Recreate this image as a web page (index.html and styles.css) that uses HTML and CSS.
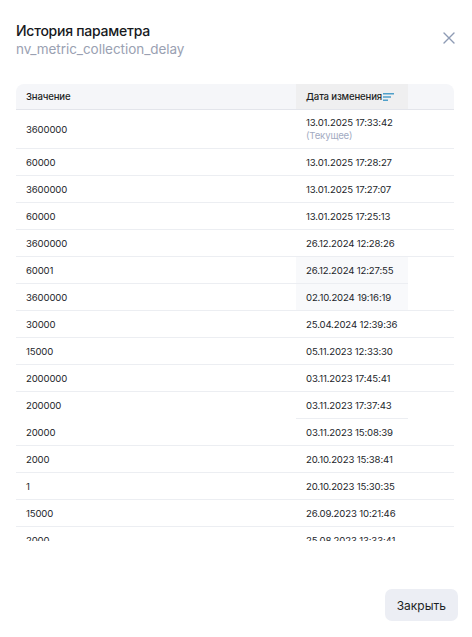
FILE: index.html
```html
<!DOCTYPE html>
<html lang="ru">
<head>
    <meta charset="UTF-8">
    <title>История параметра</title>
    <link rel="stylesheet" href="styles.css">
</head>
<body>
    <div class="modal">
        <!-- Header -->
        <div class="modal-head">
            <div>
                <h2 class="modal-title">История параметра</h2>
                <div class="modal-sub">nv_metric_collection_delay</div>
            </div>
            <button class="close-btn" aria-label="Закрыть">
                <svg width="12" height="12" viewBox="0 0 12 12"><path d="M1 1L11 11M11 1L1 11" stroke="#8e9bb4" stroke-width="1.4" stroke-linecap="round"/></svg>
            </button>
        </div>

        <!-- History table -->
        <div class="table-wrap">
            <table class="history">
                <colgroup>
                    <col class="col-value">
                    <col class="col-date">
                    <col class="col-rest">
                </colgroup>
                <thead>
                    <tr>
                        <th>Значение</th>
                        <th class="sorted">Дата изменения<svg class="sort-icon" width="11" height="8" viewBox="0 0 11 8"><path d="M0 0.75H11M0 4H8M0 7.25H5" stroke="#4f9fc9" stroke-width="1.3"/></svg></th>
                        <th></th>
                    </tr>
                </thead>
                <tbody>
                    <tr class="current">
                        <td>3600000</td>
                        <td>13.01.2025 17:33:42<span class="note">(Текущее)</span></td>
                        <td></td>
                    </tr>
                    <tr><td>60000</td><td>13.01.2025 17:28:27</td><td></td></tr>
                    <tr><td>3600000</td><td>13.01.2025 17:27:07</td><td></td></tr>
                    <tr><td>60000</td><td>13.01.2025 17:25:13</td><td></td></tr>
                    <tr><td>3600000</td><td>26.12.2024 12:28:26</td><td></td></tr>
                    <tr><td>60001</td><td class="hl">26.12.2024 12:27:55</td><td class="no-line"></td></tr>
                    <tr><td>3600000</td><td class="hl">02.10.2024 19:16:19</td><td></td></tr>
                    <tr><td>30000</td><td>25.04.2024 12:39:36</td><td></td></tr>
                    <tr><td>15000</td><td>05.11.2023 12:33:30</td><td></td></tr>
                    <tr><td>2000000</td><td>03.11.2023 17:45:41</td><td></td></tr>
                    <tr><td class="no-line">200000</td><td>03.11.2023 17:37:43</td><td class="no-line"></td></tr>
                    <tr><td>20000</td><td>03.11.2023 15:08:39</td><td></td></tr>
                    <tr><td>2000</td><td>20.10.2023 15:38:41</td><td></td></tr>
                    <tr><td>1</td><td>20.10.2023 15:30:35</td><td></td></tr>
                    <tr><td>15000</td><td>26.09.2023 10:21:46</td><td></td></tr>
                    <tr><td>2000</td><td>25.08.2023 13:33:41</td><td></td></tr>
                </tbody>
            </table>
        </div>

        <!-- Footer -->
        <div class="modal-foot">
            <button class="btn-close">Закрыть</button>
        </div>
    </div>
</body>
</html>
```

FILE: styles.css
```css
/* Global */
body {
    margin: 0;
    background: #fff;
    font-family: 'Inter', 'Noto Sans', sans-serif;
    color: #1d1f24;
}

.modal {
    height: 637px;
    display: flex;
    flex-direction: column;
    padding: 0 18px 16px 16px;
    box-sizing: border-box;
}

/* Header */
.modal-head {
    display: flex;
    justify-content: space-between;
    align-items: flex-start;
    padding-top: 22px;
}

.modal-title {
    margin: 0;
    font-size: 14px;
    font-weight: 500;
    line-height: 18px;
    letter-spacing: -0.25px;
    color: #17191d;
}

.modal-sub {
    margin-top: 1px;
    font-size: 13.5px;
    line-height: 17px;
    color: #9aa1b2;
    letter-spacing: -0.05px;
}

.close-btn {
    border: none;
    background: none;
    padding: 0;
    margin-top: 10px;
    margin-right: -1px;
    width: 12px;
    height: 12px;
    cursor: pointer;
}

/* Table */
.table-wrap {
    margin-top: 26px;
    height: 457px;
    overflow: hidden;
}

.history {
    width: 438px;
    border-collapse: separate;
    border-spacing: 0;
    table-layout: fixed;
    font-size: 9.6px;
    letter-spacing: -0.15px;
}

.col-value { width: 280px; }
.col-date { width: 112px; }
.col-rest { width: 46px; }

.history th {
    height: 25px;
    padding: 0 10px;
    text-align: left;
    font-weight: 500;
    background: #f5f6f9;
    border-bottom: 1px solid #e3e5eb;
    color: #1d1f24;
    white-space: nowrap;
}

.history th:first-child { border-top-left-radius: 8px; }
.history th:last-child { border-top-right-radius: 8px; }

.history th.sorted {
    background: #efeff0;
}

.sort-icon {
    margin-left: 1px;
    vertical-align: -1px;
}

.history td {
    height: 26px;
    padding: 0 10px;
    border-bottom: 1px solid #eceef2;
    vertical-align: middle;
    color: #24262b;
    white-space: nowrap;
}

.history tr.current td { height: 38px; }

.history td.hl { background: #f8f9fb; }
.history td.no-line { border-bottom-color: transparent; }

.note {
    display: block;
    margin-top: 2px;
    color: #a3abc2;
}

/* Footer */
.modal-foot {
    margin-top: auto;
    display: flex;
    justify-content: flex-end;
    margin-right: -4px;
}

.btn-close {
    border: none;
    background: #eceef4;
    border-radius: 7px;
    padding: 0 12px;
    height: 32px;
    font-family: inherit;
    font-size: 12px;
    color: #1d1f24;
    cursor: pointer;
}
```
